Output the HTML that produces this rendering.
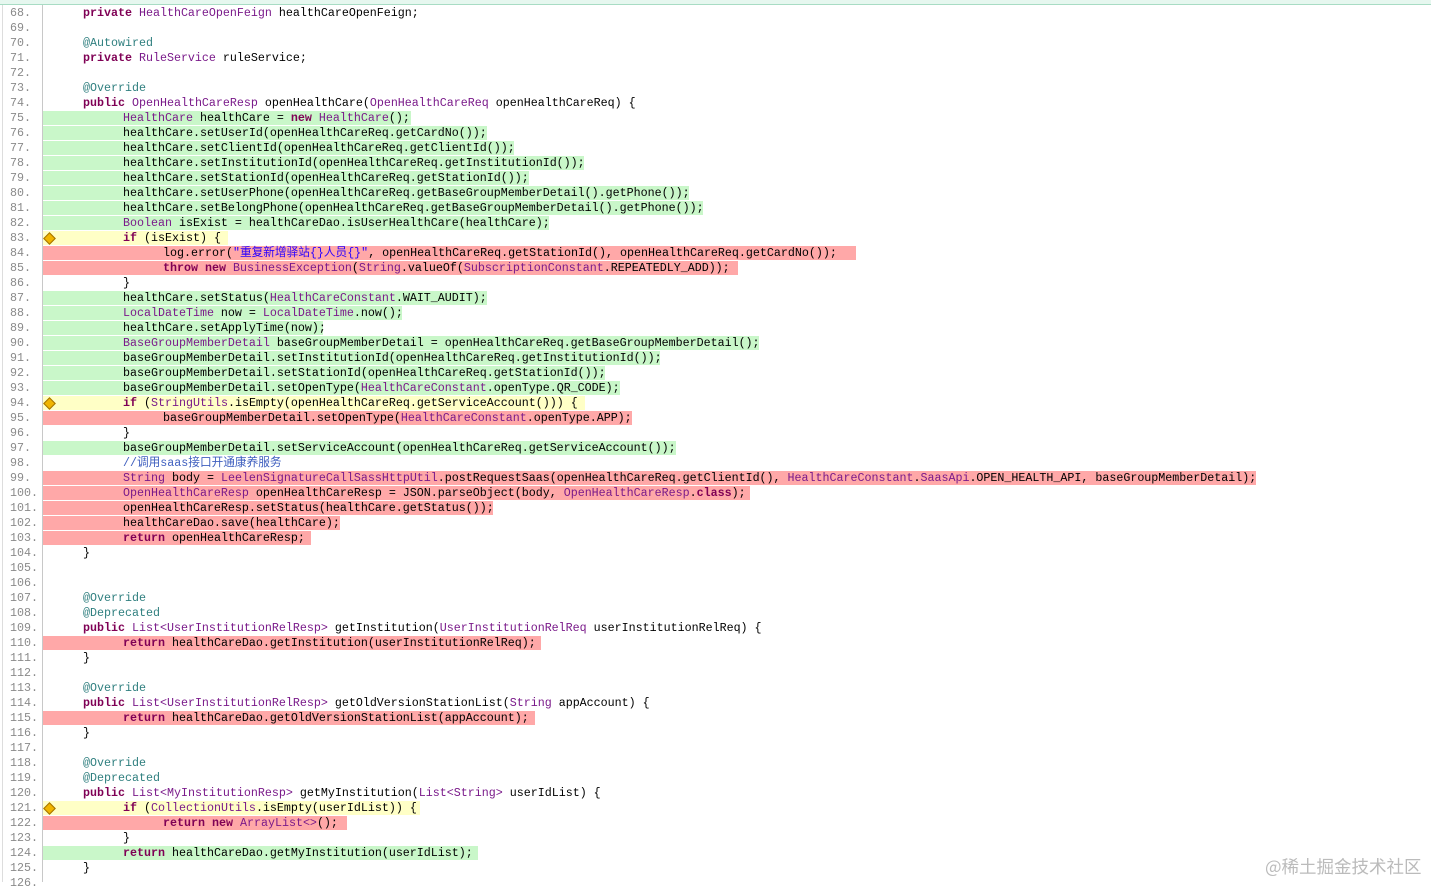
<!DOCTYPE html>
<html><head><meta charset="utf-8"><style>
body{margin:0;width:1431px;height:882px;overflow:hidden;background:#fff;position:relative;font-family:"Liberation Mono","Noto Sans CJK SC",monospace;font-size:11.67px;color:#000}
.top{position:absolute;left:0;top:0;width:1431px;height:4px;background:#e6f7ef;border-bottom:1px solid #a8dcc4}
.gut{position:absolute;left:42px;top:5px;width:1px;height:877px;background:#c8c8c8}
.lb{position:absolute;left:2px;top:5px;width:1px;height:877px;background:#ddd}
.n{position:absolute;left:10px;color:#8a8a8a;height:14px;line-height:15px}
.r{position:absolute;height:14px;line-height:15px;white-space:pre}
.h{position:absolute;left:43px;height:14px}
.g{background:#c9f7c9}.y{background:#ffffc6}.d{background:#ffa8a8}
.k{color:#7f0055;font-weight:bold}.t{color:#7a1a8a}.a{color:#2f7f7f}.s{color:#2a00ff}.c{color:#3f5fbf}
.dia{position:absolute;left:45px;width:7px;height:7px;background:#f0b400;border:1px solid #a07000;transform:rotate(45deg)}
.wm{position:absolute;left:1265px;top:854px;font-size:17.5px;color:#bbb;font-family:"Noto Sans CJK SC",sans-serif}
</style></head><body>
<div class="top"></div><div class="lb"></div><div class="gut"></div>

<div class="h g" style="top:111px;width:368px"></div>
<div class="h g" style="top:126px;width:444px"></div>
<div class="h g" style="top:141px;width:471px"></div>
<div class="h g" style="top:156px;width:541px"></div>
<div class="h g" style="top:171px;width:486px"></div>
<div class="h g" style="top:186px;width:646px"></div>
<div class="h g" style="top:201px;width:660px"></div>
<div class="h g" style="top:216px;width:506px"></div>
<div class="h y" style="top:231px;width:185px"></div>
<div class="h d" style="top:246px;width:813px"></div>
<div class="h d" style="top:261px;width:695px"></div>
<div class="h g" style="top:291px;width:444px"></div>
<div class="h g" style="top:306px;width:359px"></div>
<div class="h g" style="top:321px;width:280px"></div>
<div class="h g" style="top:336px;width:716px"></div>
<div class="h g" style="top:351px;width:617px"></div>
<div class="h g" style="top:366px;width:562px"></div>
<div class="h g" style="top:381px;width:577px"></div>
<div class="h y" style="top:396px;width:542px"></div>
<div class="h d" style="top:411px;width:589px"></div>
<div class="h g" style="top:441px;width:633px"></div>
<div class="h d" style="top:471px;width:1213px"></div>
<div class="h d" style="top:486px;width:707px"></div>
<div class="h d" style="top:501px;width:450px"></div>
<div class="h d" style="top:516px;width:297px"></div>
<div class="h d" style="top:531px;width:268px"></div>
<div class="h d" style="top:636px;width:498px"></div>
<div class="h d" style="top:711px;width:492px"></div>
<div class="h y" style="top:801px;width:377px"></div>
<div class="h d" style="top:816px;width:304px"></div>
<div class="h g" style="top:846px;width:435px"></div>

<div class="dia" style="top:234px"></div>
<div class="dia" style="top:399px"></div>
<div class="dia" style="top:804px"></div>

<div class="n" style="top:6px">68.</div><div class="n" style="top:21px">69.</div><div class="n" style="top:36px">70.</div><div class="n" style="top:51px">71.</div><div class="n" style="top:66px">72.</div><div class="n" style="top:81px">73.</div><div class="n" style="top:96px">74.</div><div class="n" style="top:111px">75.</div><div class="n" style="top:126px">76.</div><div class="n" style="top:141px">77.</div><div class="n" style="top:156px">78.</div><div class="n" style="top:171px">79.</div><div class="n" style="top:186px">80.</div><div class="n" style="top:201px">81.</div><div class="n" style="top:216px">82.</div><div class="n" style="top:231px">83.</div><div class="n" style="top:246px">84.</div><div class="n" style="top:261px">85.</div><div class="n" style="top:276px">86.</div><div class="n" style="top:291px">87.</div><div class="n" style="top:306px">88.</div><div class="n" style="top:321px">89.</div><div class="n" style="top:336px">90.</div><div class="n" style="top:351px">91.</div><div class="n" style="top:366px">92.</div><div class="n" style="top:381px">93.</div><div class="n" style="top:396px">94.</div><div class="n" style="top:411px">95.</div><div class="n" style="top:426px">96.</div><div class="n" style="top:441px">97.</div><div class="n" style="top:456px">98.</div><div class="n" style="top:471px">99.</div><div class="n" style="top:486px">100.</div><div class="n" style="top:501px">101.</div><div class="n" style="top:516px">102.</div><div class="n" style="top:531px">103.</div><div class="n" style="top:546px">104.</div><div class="n" style="top:561px">105.</div><div class="n" style="top:576px">106.</div><div class="n" style="top:591px">107.</div><div class="n" style="top:606px">108.</div><div class="n" style="top:621px">109.</div><div class="n" style="top:636px">110.</div><div class="n" style="top:651px">111.</div><div class="n" style="top:666px">112.</div><div class="n" style="top:681px">113.</div><div class="n" style="top:696px">114.</div><div class="n" style="top:711px">115.</div><div class="n" style="top:726px">116.</div><div class="n" style="top:741px">117.</div><div class="n" style="top:756px">118.</div><div class="n" style="top:771px">119.</div><div class="n" style="top:786px">120.</div><div class="n" style="top:801px">121.</div><div class="n" style="top:816px">122.</div><div class="n" style="top:831px">123.</div><div class="n" style="top:846px">124.</div><div class="n" style="top:861px">125.</div><div class="n" style="top:876px">126.</div>

<div class="r" style="left:83px;top:6px"><span class="k">private</span> <span class="t">HealthCareOpenFeign</span> healthCareOpenFeign;</div>
<div class="r" style="left:83px;top:36px"><span class="a">@Autowired</span></div>
<div class="r" style="left:83px;top:51px"><span class="k">private</span> <span class="t">RuleService</span> ruleService;</div>
<div class="r" style="left:83px;top:81px"><span class="a">@Override</span></div>
<div class="r" style="left:83px;top:96px"><span class="k">public</span> <span class="t">OpenHealthCareResp</span> openHealthCare(<span class="t">OpenHealthCareReq</span> openHealthCareReq) {</div>
<div class="r" style="left:123px;top:111px"><span class="t">HealthCare</span> healthCare = <span class="k">new</span> <span class="t">HealthCare</span>();</div>
<div class="r" style="left:123px;top:126px">healthCare.setUserId(openHealthCareReq.getCardNo());</div>
<div class="r" style="left:123px;top:141px">healthCare.setClientId(openHealthCareReq.getClientId());</div>
<div class="r" style="left:123px;top:156px">healthCare.setInstitutionId(openHealthCareReq.getInstitutionId());</div>
<div class="r" style="left:123px;top:171px">healthCare.setStationId(openHealthCareReq.getStationId());</div>
<div class="r" style="left:123px;top:186px">healthCare.setUserPhone(openHealthCareReq.getBaseGroupMemberDetail().getPhone());</div>
<div class="r" style="left:123px;top:201px">healthCare.setBelongPhone(openHealthCareReq.getBaseGroupMemberDetail().getPhone());</div>
<div class="r" style="left:123px;top:216px"><span class="t">Boolean</span> isExist = healthCareDao.isUserHealthCare(healthCare);</div>
<div class="r" style="left:123px;top:231px"><span class="k">if</span> (isExist) {</div>
<div class="r" style="left:163px;top:246px">log.error(<span class="s">"重复新增驿站{}人员{}"</span>, openHealthCareReq.getStationId(), openHealthCareReq.getCardNo());</div>
<div class="r" style="left:163px;top:261px"><span class="k">throw</span> <span class="k">new</span> <span class="t">BusinessException</span>(<span class="t">String</span>.valueOf(<span class="t">SubscriptionConstant</span>.REPEATEDLY_ADD));</div>
<div class="r" style="left:123px;top:276px">}</div>
<div class="r" style="left:123px;top:291px">healthCare.setStatus(<span class="t">HealthCareConstant</span>.WAIT_AUDIT);</div>
<div class="r" style="left:123px;top:306px"><span class="t">LocalDateTime</span> now = <span class="t">LocalDateTime</span>.now();</div>
<div class="r" style="left:123px;top:321px">healthCare.setApplyTime(now);</div>
<div class="r" style="left:123px;top:336px"><span class="t">BaseGroupMemberDetail</span> baseGroupMemberDetail = openHealthCareReq.getBaseGroupMemberDetail();</div>
<div class="r" style="left:123px;top:351px">baseGroupMemberDetail.setInstitutionId(openHealthCareReq.getInstitutionId());</div>
<div class="r" style="left:123px;top:366px">baseGroupMemberDetail.setStationId(openHealthCareReq.getStationId());</div>
<div class="r" style="left:123px;top:381px">baseGroupMemberDetail.setOpenType(<span class="t">HealthCareConstant</span>.openType.QR_CODE);</div>
<div class="r" style="left:123px;top:396px"><span class="k">if</span> (<span class="t">StringUtils</span>.isEmpty(openHealthCareReq.getServiceAccount())) {</div>
<div class="r" style="left:163px;top:411px">baseGroupMemberDetail.setOpenType(<span class="t">HealthCareConstant</span>.openType.APP);</div>
<div class="r" style="left:123px;top:426px">}</div>
<div class="r" style="left:123px;top:441px">baseGroupMemberDetail.setServiceAccount(openHealthCareReq.getServiceAccount());</div>
<div class="r" style="left:123px;top:456px"><span class="c">//调用saas接口开通康养服务</span></div>
<div class="r" style="left:123px;top:471px"><span class="t">String</span> body = <span class="t">LeelenSignatureCallSassHttpUtil</span>.postRequestSaas(openHealthCareReq.getClientId(), <span class="t">HealthCareConstant</span>.<span class="t">SaasApi</span>.OPEN_HEALTH_API, baseGroupMemberDetail);</div>
<div class="r" style="left:123px;top:486px"><span class="t">OpenHealthCareResp</span> openHealthCareResp = JSON.parseObject(body, <span class="t">OpenHealthCareResp</span>.<span class="k">class</span>);</div>
<div class="r" style="left:123px;top:501px">openHealthCareResp.setStatus(healthCare.getStatus());</div>
<div class="r" style="left:123px;top:516px">healthCareDao.save(healthCare);</div>
<div class="r" style="left:123px;top:531px"><span class="k">return</span> openHealthCareResp;</div>
<div class="r" style="left:83px;top:546px">}</div>
<div class="r" style="left:83px;top:591px"><span class="a">@Override</span></div>
<div class="r" style="left:83px;top:606px"><span class="a">@Deprecated</span></div>
<div class="r" style="left:83px;top:621px"><span class="k">public</span> <span class="t">List&lt;UserInstitutionRelResp&gt;</span> getInstitution(<span class="t">UserInstitutionRelReq</span> userInstitutionRelReq) {</div>
<div class="r" style="left:123px;top:636px"><span class="k">return</span> healthCareDao.getInstitution(userInstitutionRelReq);</div>
<div class="r" style="left:83px;top:651px">}</div>
<div class="r" style="left:83px;top:681px"><span class="a">@Override</span></div>
<div class="r" style="left:83px;top:696px"><span class="k">public</span> <span class="t">List&lt;UserInstitutionRelResp&gt;</span> getOldVersionStationList(<span class="t">String</span> appAccount) {</div>
<div class="r" style="left:123px;top:711px"><span class="k">return</span> healthCareDao.getOldVersionStationList(appAccount);</div>
<div class="r" style="left:83px;top:726px">}</div>
<div class="r" style="left:83px;top:756px"><span class="a">@Override</span></div>
<div class="r" style="left:83px;top:771px"><span class="a">@Deprecated</span></div>
<div class="r" style="left:83px;top:786px"><span class="k">public</span> <span class="t">List&lt;MyInstitutionResp&gt;</span> getMyInstitution(<span class="t">List&lt;String&gt;</span> userIdList) {</div>
<div class="r" style="left:123px;top:801px"><span class="k">if</span> (<span class="t">CollectionUtils</span>.isEmpty(userIdList)) {</div>
<div class="r" style="left:163px;top:816px"><span class="k">return</span> <span class="k">new</span> <span class="t">ArrayList&lt;&gt;</span>();</div>
<div class="r" style="left:123px;top:831px">}</div>
<div class="r" style="left:123px;top:846px"><span class="k">return</span> healthCareDao.getMyInstitution(userIdList);</div>
<div class="r" style="left:83px;top:861px">}</div>
<div class="wm">@稀土掘金技术社区</div>
</body></html>
